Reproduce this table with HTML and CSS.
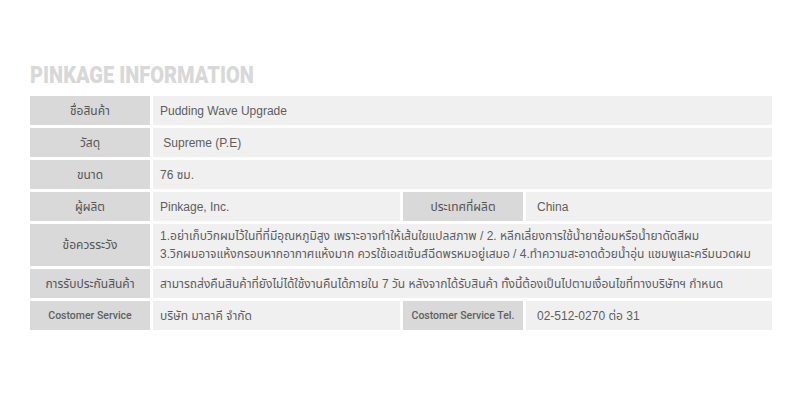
FILE: index.html
```html
<!DOCTYPE html>
<html lang="th">
<head>
<meta charset="utf-8">
<title>Pinkage Information</title>
<link rel="stylesheet" href="styles.css">
</head>
<body>
<div class="wrap">
  <h2 class="title"><span class="title-text">PINKAGE INFORMATION</span></h2>
  <div class="info">
    <div class="lbl">ชื่อสินค้า</div>
    <div class="val span3">Pudding Wave Upgrade</div>

    <div class="lbl">วัสดุ</div>
    <div class="val span3">&nbsp;Supreme (P.E)</div>

    <div class="lbl">ขนาด</div>
    <div class="val span3">76 ซม.</div>

    <div class="lbl">ผู้ผลิต</div>
    <div class="val">Pinkage, Inc.</div>
    <div class="lbl">ประเทศที่ผลิต</div>
    <div class="val val2">China</div>

    <div class="lbl">ข้อควรระวัง</div>
    <div class="val span3 multi">1.อย่าเก็บวิกผมไว้ในที่ที่มีอุณหภูมิสูง เพราะอาจทำให้เส้นใยแปลสภาพ / 2. หลีกเลี่ยงการใช้น้ำยาย้อมหรือน้ำยาดัดสีผม<br>3.วิกผมอาจแห้งกรอบหากอากาศแห้งมาก ควรใช้เอสเซ้นส์ฉีดพรหมอยู่เสมอ / 4.ทำความสะอาดด้วยน้ำอุ่น แชมพูและครีมนวดผม</div>

    <div class="lbl">การรับประกันสินค้า</div>
    <div class="val span3">สามารถส่งคืนสินค้าที่ยังไม่ได้ใช้งานคืนได้ภายใน 7 วัน หลังจากได้รับสินค้า ทั้งนี้ต้องเป็นไปตามเงื่อนไขที่ทางบริษัทฯ กำหนด</div>

    <div class="lbl en">Costomer Service</div>
    <div class="val">บริษัท มาลาคี จำกัด</div>
    <div class="lbl en">Costomer Service Tel.</div>
    <div class="val val2">02-512-0270 ต่อ 31</div>
  </div>
</div>
</body>
</html>
```

FILE: styles.css
```css
html, body {
  margin: 0;
  padding: 0;
  background: #ffffff;
}

.wrap {
  padding: 62px 28px 0 30px;
  font-family: "Liberation Sans", "Noto Sans", "Noto Sans Thai", sans-serif;
}

.title {
  margin: 0 0 6px 0;
  font-family: "Roboto", "Liberation Sans", sans-serif;
  font-weight: 900;
  font-size: 23px;
  line-height: 28px;
  color: #d8d8d8;
}

.title-text {
  display: inline-block;
  transform: scaleX(0.87);
  transform-origin: left center;
  white-space: nowrap;
}

.info {
  display: grid;
  grid-template-columns: 120px 247px 120px 246px;
  grid-template-rows: 29px 29px 29px 29px 42px 29px 29px;
  column-gap: 3px;
  row-gap: 3px;
  width: 742px;
}

.lbl {
  background: #d9d9d9;
  color: #555555;
  font-size: 12px;
  display: flex;
  align-items: center;
  justify-content: center;
  white-space: nowrap;
}

.lbl.en {
  font-family: "Roboto", "Liberation Sans", sans-serif;
  font-weight: 500;
  font-size: 10.5px;
  color: #606060;
}

.val {
  background: #f0f0f0;
  color: #5e5e5e;
  font-size: 12px;
  display: flex;
  align-items: center;
  padding-left: 7px;
  white-space: nowrap;
}

.val2 {
  padding-left: 11px;
}

.span3 {
  grid-column: span 3;
}

.multi {
  display: block;
  line-height: 18px;
  padding-top: 3px;
}
```
